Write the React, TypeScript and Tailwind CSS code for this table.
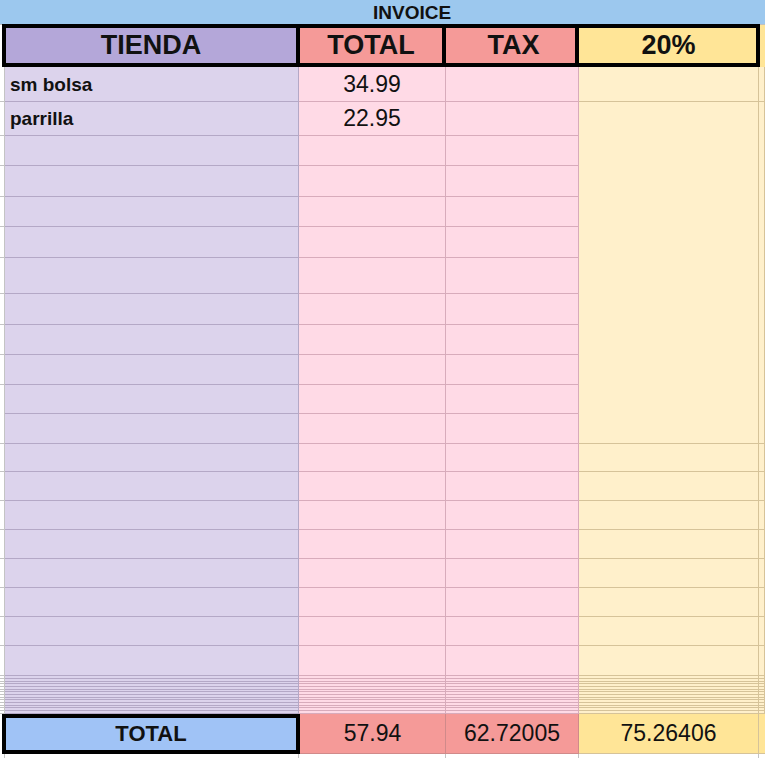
import React from "react";

const ROWS = [35, 34, 30, 31, 30, 31, 36, 31, 30, 30, 29, 30, 28, 29, 29, 29, 29, 29, 29, 30];
const DENSE = [3, 3, 2, 3, 3, 2, 3, 3, 2, 3, 3, 2, 3, 3];

type Cell = { h: number; text?: string; kind?: "name" | "num" };

function buildCells(merge?: [number, number], texts?: Record<number, { text: string; kind: "name" | "num" }>): Cell[] {
  const cells: Cell[] = [];
  for (let i = 0; i < ROWS.length; i++) {
    if (merge && i === merge[0]) {
      let h = 0;
      for (let j = merge[0]; j <= merge[1]; j++) h += ROWS[j];
      cells.push({ h });
      i = merge[1];
      continue;
    }
    const t = texts?.[i];
    cells.push({ h: ROWS[i], text: t?.text, kind: t?.kind });
  }
  DENSE.forEach((h) => cells.push({ h }));
  return cells;
}

function Column({
  widthClass,
  bgClass,
  lineClass,
  cells,
}: {
  widthClass: string;
  bgClass: string;
  lineClass: string;
  cells: Cell[];
}) {
  return (
    <div className={`${widthClass} ${bgClass} ${lineClass} flex flex-col border-r shrink-0`}>
      {cells.map((c, i) => (
        <div
          key={i}
          className={`${lineClass} border-b flex items-center shrink-0 ${
            c.kind === "num" ? "justify-center" : "justify-start"
          }`}
          style={{ height: c.h }}
        >
          {c.text && c.kind === "name" && (
            <span className="pl-[5px] text-[19px] font-bold text-[#111] leading-none">{c.text}</span>
          )}
          {c.text && c.kind === "num" && (
            <span className="text-[23px] text-[#111] leading-none">{c.text}</span>
          )}
        </div>
      ))}
    </div>
  );
}

export default function App() {
  const font = { fontFamily: '"Liberation Sans", Arial, Helvetica, sans-serif' };
  return (
    <div className="w-[765px] h-[758px] overflow-hidden bg-white flex flex-col" style={font}>
      {/* Title row */}
      <div className="h-[24px] bg-[#9cc8ee] flex items-center shrink-0">
        <span className="pl-[373px] text-[19px] font-bold text-[#111] leading-none">INVOICE</span>
      </div>

      {/* Header row */}
      <div className="h-[43px] flex shrink-0">
        <div className="w-[2px] bg-white border-t border-[#c0c0c0]" />
        <div className="w-[758px] border-[4px] border-black flex shrink-0">
          <div className="w-[294px] bg-[#b4a7d9] border-r-[4px] border-black flex items-center justify-center">
            <span className="text-[27px] font-bold text-[#111] leading-none">TIENDA</span>
          </div>
          <div className="w-[146px] bg-[#f59a98] border-r-[4px] border-black flex items-center justify-center">
            <span className="text-[27px] font-bold text-[#111] leading-none">TOTAL</span>
          </div>
          <div className="w-[133px] bg-[#f59a98] border-r-[4px] border-black flex items-center justify-center">
            <span className="text-[27px] font-bold text-[#111] leading-none pl-[6px]">TAX</span>
          </div>
          <div className="flex-1 bg-[#ffe597] flex items-center justify-center">
            <span className="text-[27px] font-bold text-[#111] leading-none pl-[2px]">20%</span>
          </div>
        </div>
        <div className="flex-1 bg-[#ffe597] border-t border-[#c0c0c0]" />
      </div>

      {/* Body */}
      <div className="flex shrink-0">
        <Column
          widthClass="w-[5px]"
          bgClass="bg-white"
          lineClass="border-[#c4c4c4]"
          cells={buildCells([10, 11])}
        />
        <Column
          widthClass="w-[294px]"
          bgClass="bg-[#dcd3ec]"
          lineClass="border-[#b4a8c6]"
          cells={buildCells(undefined, {
            0: { text: "sm bolsa", kind: "name" },
            1: { text: "parrilla", kind: "name" },
          })}
        />
        <Column
          widthClass="w-[147px]"
          bgClass="bg-[#ffdae6]"
          lineClass="border-[#d8abbb]"
          cells={buildCells(undefined, {
            0: { text: "34.99", kind: "num" },
            1: { text: "22.95", kind: "num" },
          })}
        />
        <Column
          widthClass="w-[133px]"
          bgClass="bg-[#ffdae6]"
          lineClass="border-[#d8abbb]"
          cells={buildCells()}
        />
        <Column
          widthClass="w-[180px]"
          bgClass="bg-[#fff0cb]"
          lineClass="border-[#d6c399]"
          cells={buildCells([1, 11])}
        />
        <div className="flex-1 min-w-0">
          <Column
            widthClass="w-full"
            bgClass="bg-[#fff0cb]"
            lineClass="border-[#d6c399]"
            cells={buildCells([1, 11])}
          />
        </div>
      </div>

      {/* Total row */}
      <div className="h-[40px] flex shrink-0">
        <div className="w-[2px] bg-white" />
        <div className="w-[298px] shrink-0 border-[4px] border-black bg-[#a0c3f6] flex items-center justify-center">
          <span className="text-[22px] font-bold text-[#111] leading-none">TOTAL</span>
        </div>
        <div className="w-[146px] shrink-0 bg-[#f59a98] border-r border-b border-[#d08a8a] flex items-center justify-center">
          <span className="text-[23px] text-[#111] leading-none">57.94</span>
        </div>
        <div className="w-[133px] shrink-0 bg-[#f59a98] border-r border-b border-[#d08a8a] flex items-center justify-center">
          <span className="text-[23px] text-[#111] leading-none">62.72005</span>
        </div>
        <div className="w-[180px] shrink-0 bg-[#ffe597] border-r border-b border-[#d6c399] flex items-center justify-center">
          <span className="text-[23px] text-[#111] leading-none">75.26406</span>
        </div>
        <div className="flex-1 bg-[#ffe597] border-b border-[#d6c399]" />
      </div>

      {/* Bottom strip */}
      <div className="flex-1 flex">
        <div className="w-[5px] border-r border-[#c4c4c4] shrink-0" />
        <div className="w-[294px] border-r border-[#c4c4c4] shrink-0" />
        <div className="w-[147px] border-r border-[#c4c4c4] shrink-0" />
        <div className="w-[133px] border-r border-[#c4c4c4] shrink-0" />
        <div className="w-[180px] border-r border-[#c4c4c4] shrink-0" />
        <div className="flex-1" />
      </div>
    </div>
  );
}
